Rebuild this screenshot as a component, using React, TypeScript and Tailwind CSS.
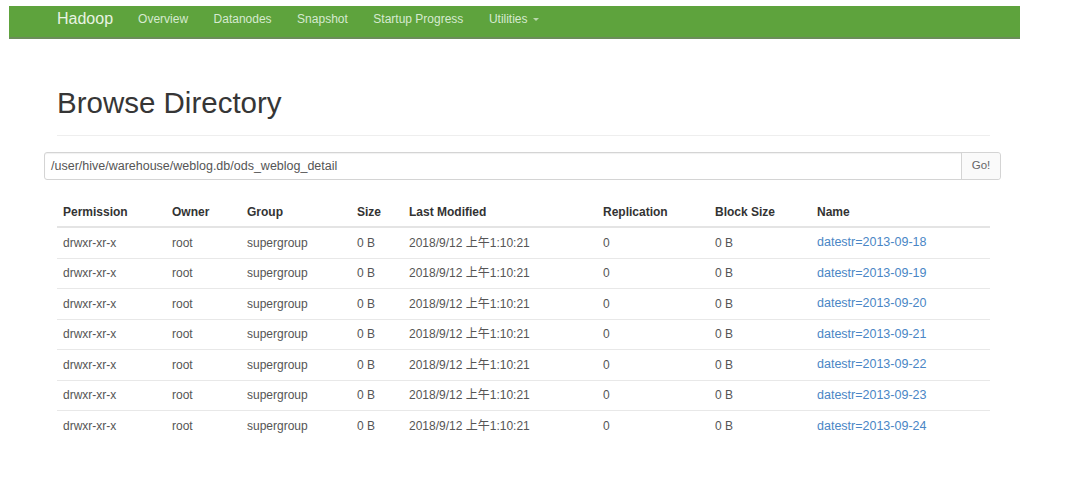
import React from "react";

const rows = [
  "datestr=2013-09-18",
  "datestr=2013-09-19",
  "datestr=2013-09-20",
  "datestr=2013-09-21",
  "datestr=2013-09-22",
  "datestr=2013-09-23",
  "datestr=2013-09-24",
];

export default function App() {
  return (
    <div
      className="w-[1066px] h-[477px] bg-white overflow-hidden"
      style={{ fontFamily: '"Liberation Sans", "Noto Sans CJK SC", sans-serif' }}
    >
      <div className="pt-[6px] pl-[9px]">
        <nav className="w-[1011px] h-[33px] bg-[#5ea33d] border-b-2 border-[#6b8d5a] flex items-start pt-[5px] pl-[48px]">
          <span className="text-[16px] text-[#e8f3e2] mr-[25px] leading-[16px]">Hadoop</span>
          <div className="flex items-center gap-[25.5px] text-[12px] text-[#d6ead0] leading-[14px] pt-[1px]">
            <span>Overview</span>
            <span>Datanodes</span>
            <span>Snapshot</span>
            <span>Startup Progress</span>
            <span className="flex items-center gap-[5px]">
              Utilities
              <span className="inline-block w-0 h-0 border-l-[3px] border-r-[3px] border-t-[3px] border-l-transparent border-r-transparent border-t-[#b9d8ad]" />
            </span>
          </div>
        </nav>
      </div>

      <div className="pl-[57px] pr-[76px] pt-[47px]">
        <h1 className="text-[29.5px] leading-[34px] text-[#363636]">Browse Directory</h1>
        <div className="mt-[15px] border-t border-[#eeeeee]" />
      </div>

      <div className="ml-[44px] w-[957px] mt-[16px] flex h-[28px] border border-[#d4d4d4] rounded-[3px] shadow-[inset_0_1px_1px_rgba(0,0,0,0.06)]">
        <div className="flex-1 flex items-center pl-[6px] text-[12.5px] text-[#555]">
          /user/hive/warehouse/weblog.db/ods_weblog_detail
        </div>
        <div className="w-[39px] border-l border-[#d4d4d4] bg-[#fafafa] flex items-center justify-center text-[11.5px] text-[#666] rounded-r-[3px]">
          Go!
        </div>
      </div>

      <div className="ml-[57px] w-[933px] mt-[16px] text-[12px]">
        <div className="flex h-[32px] items-center pt-[1px] font-bold text-[#333] border-b-2 border-[#e4e4e4]">
          <div className="w-[115px] pl-[6px]">Permission</div>
          <div className="w-[75px]">Owner</div>
          <div className="w-[110px]">Group</div>
          <div className="w-[52px]">Size</div>
          <div className="w-[194px]">Last Modified</div>
          <div className="w-[112px]">Replication</div>
          <div className="w-[102px]">Block Size</div>
          <div className="flex-1">Name</div>
        </div>
        {rows.map((name, i) => (
          <div
            key={name}
            className={`flex h-[30.5px] items-center text-[#555] ${i < rows.length - 1 ? "border-b border-[#e8e8e8]" : ""}`}
          >
            <div className="w-[115px] pl-[6px]">drwxr-xr-x</div>
            <div className="w-[75px]">root</div>
            <div className="w-[110px]">supergroup</div>
            <div className="w-[52px]">0 B</div>
            <div className="w-[194px]">2018/9/12 上午1:10:21</div>
            <div className="w-[112px]">0</div>
            <div className="w-[102px]">0 B</div>
            <div className="flex-1 text-[#4a86c5] text-[12.5px]">{name}</div>
          </div>
        ))}
      </div>
    </div>
  );
}
